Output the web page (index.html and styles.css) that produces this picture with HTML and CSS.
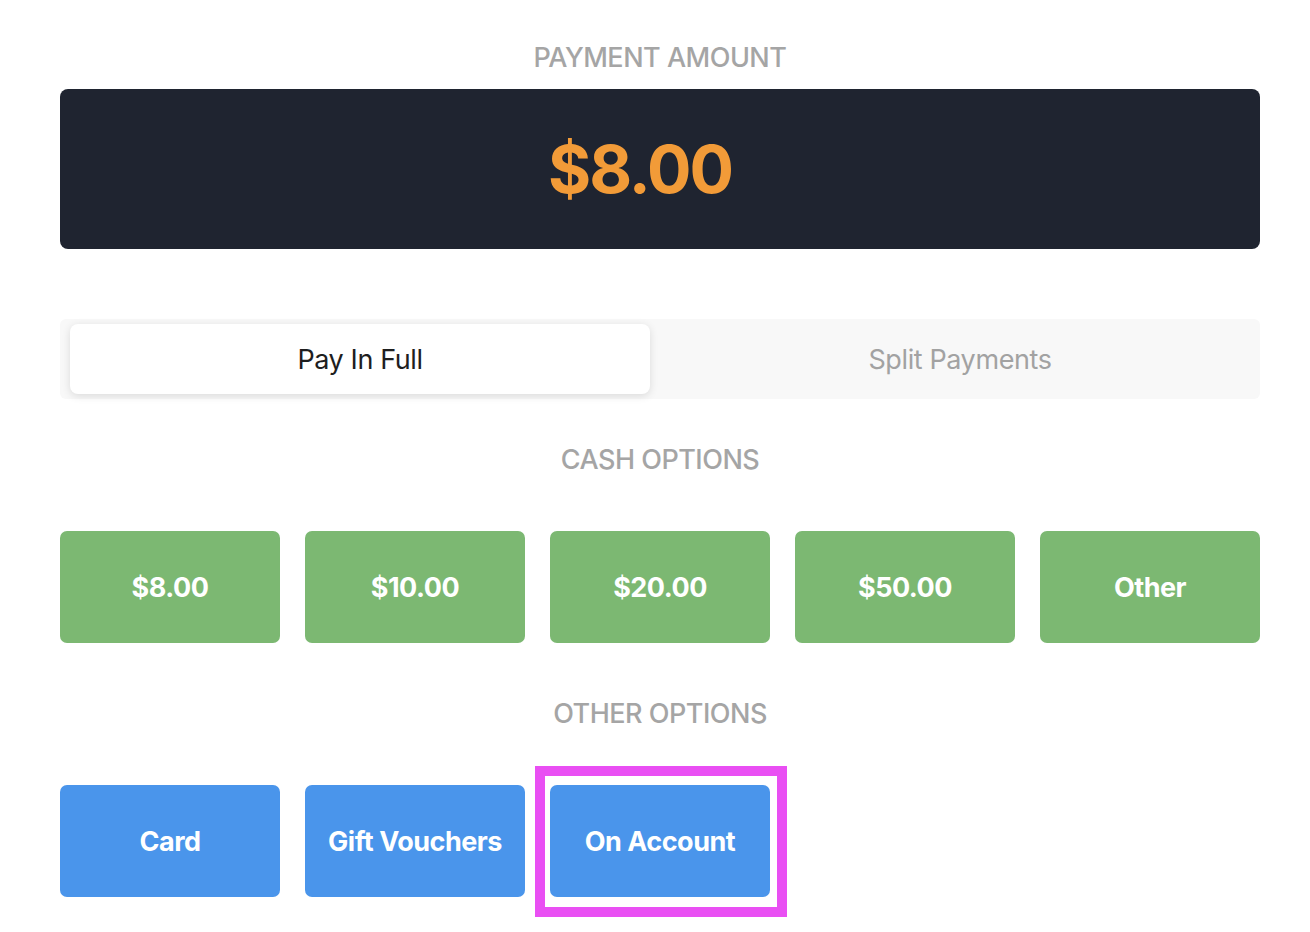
FILE: index.html
```html
<!DOCTYPE html>
<html lang="en">
<head>
<meta charset="utf-8">
<title>Payment</title>
<link rel="stylesheet" href="styles.css">
</head>
<body>
<main class="page">
  <h2 class="section-title title-amount">PAYMENT AMOUNT</h2>
  <div class="amount-box"><span class="amount">$8.00</span></div>

  <div class="toggle">
    <button class="tab tab-active">Pay In Full</button>
    <button class="tab">Split Payments</button>
  </div>

  <h2 class="section-title title-section">CASH OPTIONS</h2>
  <div class="options">
    <button class="opt opt-cash">$8.00</button>
    <button class="opt opt-cash">$10.00</button>
    <button class="opt opt-cash">$20.00</button>
    <button class="opt opt-cash">$50.00</button>
    <button class="opt opt-cash">Other</button>
  </div>

  <h2 class="section-title title-section">OTHER OPTIONS</h2>
  <div class="options">
    <button class="opt opt-other">Card</button>
    <button class="opt opt-other">Gift Vouchers</button>
    <div class="highlight-wrap">
      <button class="opt opt-other opt-full">On Account</button>
      <span class="highlight"></span>
    </div>
  </div>
</main>
</body>
</html>
```

FILE: styles.css
```css
* { box-sizing: border-box; }
html, body { margin: 0; padding: 0; background: #ffffff; }
body {
  font-family: Inter, "Noto Sans", "Liberation Sans", sans-serif;
  -webkit-font-smoothing: antialiased;
}
.page {
  padding: 0 50px 35px 60px;
  display: flex;
  flex-direction: column;
}
.section-title {
  margin: 0;
  text-align: center;
  font-size: 27px;
  line-height: 32px;
  font-weight: 500;
  color: #a5a5a5;
  letter-spacing: -0.5px;
}
.title-amount { margin-top: 42px; }
.title-section { margin-top: 45px; }
.options + .title-section { margin-top: 55px; }

.amount-box {
  margin-top: 15px;
  height: 160px;
  background: #1f2430;
  border-radius: 8px;
  padding-right: 40px;
  display: flex;
  align-items: center;
  justify-content: center;
}
.amount {
  font-size: 66px;
  font-weight: 700;
  color: #f29b38;
  letter-spacing: -2px;
}

.toggle {
  margin-top: 70px;
  height: 80px;
  background: #f8f8f8;
  border-radius: 6px;
  padding: 5px 10px;
  display: grid;
  grid-template-columns: 1fr 1fr;
  gap: 20px;
}
.tab {
  border: 0;
  background: transparent;
  font-family: inherit;
  font-size: 27px;
  letter-spacing: -0.4px;
  color: #a2a2a2;
  border-radius: 8px;
  padding: 0;
}
.tab-active {
  background: #ffffff;
  color: #1e1e1e;
  box-shadow: 0 2px 8px rgba(0, 0, 0, 0.12);
}

.options {
  margin-top: 55px;
  display: grid;
  grid-template-columns: repeat(5, 1fr);
  gap: 25px;
}
.opt {
  height: 112px;
  border: 0;
  border-radius: 7px;
  color: #ffffff;
  font-family: inherit;
  font-size: 27px;
  font-weight: 700;
  letter-spacing: -0.5px;
  padding: 0;
}
.opt-cash { background: #7cb872; }
.opt-other { background: #4a95eb; }
.opt-full { width: 100%; display: block; }

.highlight-wrap { position: relative; }
.highlight {
  position: absolute;
  left: -15px;
  top: -19px;
  right: -17px;
  bottom: -20px;
  border: 10px solid #e94ff3;
  pointer-events: none;
}
```
